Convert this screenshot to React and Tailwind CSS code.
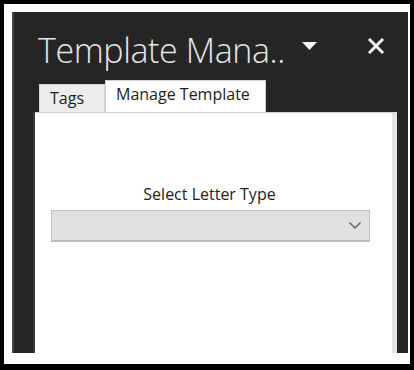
import React from 'react';

const font = { fontFamily: '"Open Sans", "Noto Sans", sans-serif' };

const TitleBar = () => (
  <div className="flex items-start h-[68px] pl-[24px] pr-[24px]">
    <h1 className="mt-[18px] text-[34px] leading-[40px] font-light text-[#e6e6e6] tracking-[-0.4px] whitespace-nowrap">
      Template Mana..
    </h1>
    <svg className="mt-[30px] ml-[17px]" width="15" height="8" viewBox="0 0 15 8">
      <path d="M0 0 L15 0 L7.5 8 Z" fill="#f2f2f2" />
    </svg>
    <svg className="mt-[26px] ml-auto" width="16" height="16" viewBox="0 0 16 16">
      <path d="M2 2 L14 14 M14 2 L2 14" stroke="#f5f5f5" strokeWidth="3" strokeLinecap="square" />
    </svg>
  </div>
);

const Tabs = () => (
  <div className="flex items-end h-[32px] pl-[25px]">
    <div className="h-[28px] w-[66px] bg-[#ececec] border border-b-0 border-[#d6d6d6] pl-[10px] pt-[3px] text-[16px] leading-[20px] text-[#1e1e1e]">
      Tags
    </div>
    <div className="h-[32px] w-[161px] bg-white border border-b-0 border-[#d0d0d0] pl-[10px] pt-[3px] text-[16px] leading-[20px] text-[#1e1e1e]">
      Manage Template
    </div>
  </div>
);

export default function App() {
  return (
    <div className="w-[414px] h-[370px] bg-black pt-[4px] pl-[4px]" style={font}>
      <div className="w-[406px] h-[360px] bg-white pt-[8px] pl-[8px]">
        <div className="w-[396px] h-[341px] bg-[#252526] border-l-[2px] border-[#444] flex flex-col">
          <TitleBar />
          <Tabs />
          <div className="flex flex-1">
            <div className="w-[21px] border-r-[2px] border-[#3c3c3c]" />
            <div className="flex-1 bg-white border-t border-[#cfcfcf] border-r-[5px] border-r-[#e4e4e4] flex flex-col items-start">
              <p className="mt-[71px] w-full pr-[8px] text-center text-[16px] leading-[20px] text-[#222]">
                Select Letter Type
              </p>
              <div className="mt-[6px] ml-[16px] w-[319px] h-[32px] bg-[#e0e0e0] border border-[#c4c4c4] border-b-[2px] border-b-[#bdbdbd] flex items-center justify-end pr-[8px]">
                <svg width="12" height="7" viewBox="0 0 12 7">
                  <path d="M0.5 0.5 L6 6 L11.5 0.5" fill="none" stroke="#5a5a5a" strokeWidth="1.3" />
                </svg>
              </div>
            </div>
            <div className="w-[11px]" />
          </div>
        </div>
      </div>
    </div>
  );
}
